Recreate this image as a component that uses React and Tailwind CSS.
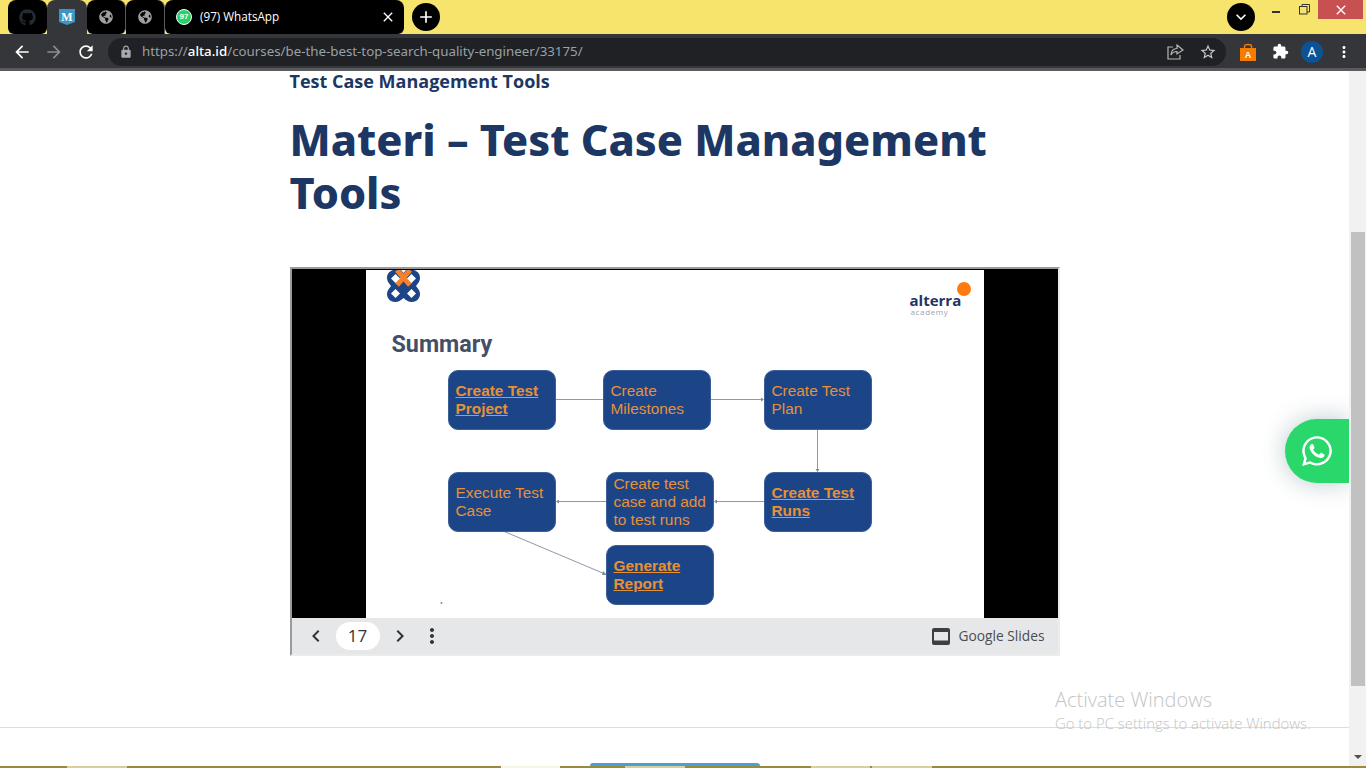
import { FaGithub, FaGlobeAmericas, FaWhatsapp } from "react-icons/fa";
import {
  MdArrowBack,
  MdArrowForward,
  MdChevronLeft,
  MdChevronRight,
  MdClose,
  MdExtension,
  MdKeyboardArrowDown,
  MdLock,
  MdMoreVert,
  MdRefresh,
  MdAdd,
  MdStarBorder,
} from "react-icons/md";

function TabStrip() {
  return (
    <div className="flex h-[34px] items-stretch bg-[#f6e46c] pl-2">
      {/* Tabs */}
      <div className="flex h-[34px] w-[39px] items-center justify-center rounded-t-lg rounded-b-md bg-black">
        <FaGithub className="h-[17px] w-[17px] text-[#232b30]" />
      </div>
      <div className="flex h-[34px] w-10 items-start justify-center rounded-t-lg bg-[#35363a] pt-[9px]">
        <svg width="16" height="17" viewBox="0 0 16 17">
          <path d="M0 0H16V13L8 16L0 13Z" fill="#3d94c6" />
          <text x="8" y="12" textAnchor="middle" fontSize="12" fontWeight="700" fill="#fff" fontFamily="Liberation Serif, serif">
            M
          </text>
        </svg>
      </div>
      <div className="flex h-[34px] w-[39px] items-center justify-center rounded-t-lg rounded-b-md border-r border-[#5a5a5a] bg-black">
        <FaGlobeAmericas className="h-[14px] w-[14px] text-[#a0a0a0]" />
      </div>
      <div className="flex h-[34px] w-[39px] items-center justify-center rounded-t-lg border-r border-[#5a5a5a] bg-black">
        <FaGlobeAmericas className="h-[14px] w-[14px] text-[#a0a0a0]" />
      </div>
      <div className="flex h-[34px] w-[239px] items-center rounded-t-lg rounded-b-md bg-black pl-[11px] pr-2">
        <div className="flex h-4 w-4 items-center justify-center rounded-full border-[1.5px] border-white bg-[#25d366]">
          <span className="font-['Liberation_Sans',sans-serif] text-[8px] font-bold text-white">97</span>
        </div>
        <span className="ml-[8px] flex-1 font-['Open_Sans',sans-serif] text-[11.7px] leading-none text-white">(97) WhatsApp</span>
        <MdClose className="h-4 w-4 text-white" />
      </div>
      <div className="ml-2 mt-[3px] flex h-7 w-7 items-center justify-center rounded-full bg-black">
        <MdAdd className="h-5 w-5 text-white" />
      </div>
      <div className="flex-1" />
      {/* Window controls */}
      <div className="mt-[3px] flex h-7 w-7 items-center justify-center rounded-full bg-black">
        <MdKeyboardArrowDown className="h-5 w-5 text-white" />
      </div>
      <div className="ml-[17px] mt-[11px] h-[2px] w-2 bg-[#333]" />
      <svg className="ml-[19px] mt-1" width="11" height="11" viewBox="0 0 11 11" fill="none" stroke="#333" strokeWidth="1">
        <rect x="0.5" y="2.5" width="7.5" height="7.5" />
        <path d="M3 2.5V0.5H10.5V8H8" />
      </svg>
      <div className="ml-[8px] mr-[3px] flex h-[19px] w-[45px] items-center justify-center bg-[#c75050]">
        <MdClose className="h-4 w-4 text-white" />
      </div>
    </div>
  );
}

function Toolbar() {
  return (
    <div className="flex h-[37px] items-start border-b-[3px] border-[#5a5b5e] bg-[#35363a] pl-3 pt-1">
      <MdArrowBack className="mt-1 h-5 w-5 text-white" />
      <MdArrowForward className="ml-3 mt-1 h-5 w-5 text-[#8b8c8e]" />
      <MdRefresh className="ml-3 mt-1 h-5 w-5 text-white" />
      <div className="ml-3 flex h-7 w-[1118px] items-center rounded-full bg-[#202124] pl-[11px]">
        <MdLock className="h-[14px] w-[14px] text-[#a8a9ab]" />
        <span className="ml-[9px] flex-1 whitespace-nowrap font-['Noto_Sans',sans-serif] text-[13.3px] text-[#9aa0a6]">
          https://<span className="font-medium text-white">alta.id</span>/courses/be-the-best-top-search-quality-engineer/33175/
        </span>
        <svg className="mr-[15px]" width="17" height="16" viewBox="0 0 17 16" fill="none" stroke="#b5b6b8" strokeWidth="1.2">
          <path d="M6 3H1V15H13V11" />
          <path d="M10 1L16 6L10 10V7.5C7 7.5 5 9 4 11C4 7.5 6 4.500 10 4.500Z" />
        </svg>
        <MdStarBorder className="mr-[9px] h-[18px] w-[18px] text-[#c4c5c7]" />
      </div>
      <svg className="ml-[14px] mt-[5px]" width="16" height="18" viewBox="0 0 16 18">
        <path d="M4.500 5V3C4.500 1 11.500 1 11.500 3V5" fill="none" stroke="#f57c00" strokeWidth="1.4" />
        <rect y="5" width="16" height="13" fill="#f57c00" />
        <text x="8" y="15" textAnchor="middle" fontSize="9" fill="#fff" fontFamily="Liberation Sans, sans-serif" fontWeight="700">
          A
        </text>
      </svg>
      <MdExtension className="ml-[16px] mt-[5px] h-[17px] w-[17px] text-white" />
      <div className="ml-[12px] mt-[3px] flex h-[22px] w-[22px] items-center justify-center rounded-full bg-[#0b5394] font-['Open_Sans',sans-serif] text-sm text-white">
        A
      </div>
      <MdMoreVert className="ml-3 mt-[5px] h-[18px] w-[18px] text-white" />
    </div>
  );
}

function SlideBox({ className, bold, lines }) {
  return (
    <div
      className={`absolute flex h-[60px] w-[108px] flex-col justify-center rounded-[10px] border border-[#3c5f98] bg-[#1c4587] pl-[7px] font-['Liberation_Sans',sans-serif] text-[15.4px] leading-[18px] text-[#e69138] ${className}`}
    >
      {lines.map((line) => (
        <span key={line} className={bold ? "w-fit font-bold underline" : ""}>
          {line}
        </span>
      ))}
    </div>
  );
}

function Slide() {
  return (
    <div className="relative h-[348px] w-[618px] overflow-hidden bg-white">
      {/* Logo */}
      <svg className="absolute left-[21px] top-0" width="33" height="32" viewBox="0 0 33 32">
        <path
          d="M6 0H27C32 2 33 5 33 8C33 11 31 13.500 29 16C31 18.500 33 21 33 24C33 28 30 32 25 32C21 32 19 30 16.500 28C14 30 12 32 8 32C3 32 0 28 0 24C0 21 2 18.500 4 16C2 13.500 0 11 0 8C0 5 1 2 6 0Z"
          fill="#1c4587"
        />
        <path d="M10 0L23 15M23 0L10 15" stroke="#f5822a" strokeWidth="5" />
        <path d="M8.500 4L13 8.500L8.500 13L4 8.500Z" fill="#fff" />
        <path d="M24.500 4L29 8.500L24.500 13L20 8.500Z" fill="#fff" />
        <path d="M8.500 19L13 23.500L8.500 28L4 23.500Z" fill="#fff" />
        <path d="M24.500 19L29 23.500L24.500 28L20 23.500Z" fill="#fff" />
        <path d="M13.500 32L16.500 29L19.500 32Z" fill="#fff" />
        <path d="M16.500 0L14 0L16.500 3L19 0Z" fill="#fff" />
      </svg>
      <div className="absolute left-[26px] top-[59px] font-['Roboto',sans-serif] text-[23.3px] font-bold leading-[30px] text-[#434f66]">Summary</div>

      {/* Brand */}
      <div className="absolute left-[591px] top-[12px] h-[14px] w-[14px] rounded-full bg-[#ff7a0f]" />
      <div className="absolute left-[544px] top-[24px] font-['Open_Sans',sans-serif] text-[15px] font-bold leading-[13px] text-[#1f3566]">alterra</div>
      <div className="absolute left-[545px] top-[37px] font-['Open_Sans',sans-serif] text-[8px] leading-[9px] tracking-[0.08em] text-[#9aa3b5]">academy</div>

      {/* Connectors */}
      <svg className="absolute inset-0" width="618" height="348" fill="#7f8a9c" stroke="none">
        <g stroke="#8e98a8" strokeWidth="1">
          <path d="M190 129.500H237" />
          <path d="M345 129.500H397" />
          <path d="M451.500 160V200" />
          <path d="M398 231.500H349" />
          <path d="M240 231.500H191" />
          <path d="M137 261L239 304" />
        </g>
        <path d="M237 127.500L240 129.500L237 131.500Z" />
        <path d="M395 127.500L398 129.500L395 131.500Z" />
        <path d="M449.500 199L451.500 202L453.500 199Z" />
        <path d="M351 229.500L348 231.500L351 233.500Z" />
        <path d="M193 229.500L190 231.500L193 233.500Z" />
        <path d="M237 301L241 305L236 305Z" />
        <circle cx="75.500" cy="333" r="1" />
      </svg>

      {/* Nodes */}
      <SlideBox className="left-[82px] top-[100px]" bold lines={["Create Test", "Project"]} />
      <SlideBox className="left-[237px] top-[100px]" lines={["Create", "Milestones"]} />
      <SlideBox className="left-[398px] top-[100px]" lines={["Create Test", "Plan"]} />
      <SlideBox className="left-[82px] top-[202px]" lines={["Execute Test", "Case"]} />
      <SlideBox className="left-[240px] top-[202px]" lines={["Create test", "case and add", "to test runs"]} />
      <SlideBox className="left-[398px] top-[202px]" bold lines={["Create Test", "Runs"]} />
      <SlideBox className="left-[240px] top-[275px]" bold lines={["Generate", "Report"]} />
    </div>
  );
}

function SlidesEmbed() {
  return (
    <div className="mt-[48px] w-[770px] border-2 border-b-[#ececec] border-l-[#9a9a9a] border-r-[#ececec] border-t-[#9a9a9a]">
      <div className="flex justify-center border-t border-black bg-black">
        <Slide />
      </div>
      <div className="flex h-9 items-center bg-[#e6e7e9] text-[#333]">
        <MdChevronLeft className="ml-3 h-6 w-6" />
        <div className="ml-2 flex h-7 w-11 items-center justify-center rounded-full bg-white font-['Open_Sans',sans-serif] text-[17px] text-[#333]">17</div>
        <MdChevronRight className="ml-2 h-6 w-6" />
        <MdMoreVert className="ml-[8px] h-6 w-6" />
        <div className="flex-1" />
        <svg width="18" height="17" viewBox="0 0 18 17">
          <rect width="18" height="17" rx="2" fill="#3c4043" />
          <rect x="2" y="4" width="14" height="8.500" fill="#e6e7e9" />
        </svg>
        <span className="ml-[9px] mr-[13px] font-['Open_Sans',sans-serif] text-[13.75px] text-[#4a4d52]">Google Slides</span>
      </div>
    </div>
  );
}

function Scrollbar() {
  return (
    <div className="flex w-[17px] flex-col bg-[#f1f1f1] pl-[2px] pr-[1px]">
      <div className="mt-[161px] h-[454px] bg-[#c1c1c1]" />
      <div className="flex-1" />
      <div className="mx-auto mb-[7px] h-0 w-0 border-x-[4px] border-t-[4px] border-x-transparent border-t-[#505050]" />
    </div>
  );
}

function Page() {
  return (
    <div className="relative flex min-h-0 flex-1 overflow-hidden">
      <div className="relative flex flex-1 flex-col items-center overflow-hidden bg-white">
        <div className="w-[770px] flex-1">
          <p className="font-['Open_Sans',sans-serif] text-lg font-bold leading-[20px] text-[#1c3763]">Test Case Management Tools</p>
          <h1 className="mt-[22px] w-[740px] font-['Noto_Sans',sans-serif] text-[43.2px] font-extrabold leading-[53px] text-[#1c3763]">
            Materi – Test Case Management Tools
          </h1>
          <SlidesEmbed />
        </div>

        {/* Footer line and the top of the next button */}
        <div className="h-px w-full bg-[#dddddd]" />
        <div className="flex h-[38px] w-full items-end justify-center">
          <div className="h-[3px] w-[170px] rounded-t-[12px] bg-[#45a2d3]" />
        </div>

        {/* Floating WhatsApp */}
        <div className="absolute right-0 top-[348px] flex h-16 w-16 items-center justify-center rounded-l-full bg-[#29d76b] shadow-[0_0_24px_rgba(30,80,90,0.3)]">
          <FaWhatsapp className="h-[34px] w-[34px] text-white" />
        </div>
      </div>
      <Scrollbar />
    </div>
  );
}

function Taskbar() {
  return (
    <div className="flex h-[2px] bg-[#9a8a3c]">
      <div className="ml-[67px] w-[60px] bg-[#d8cf9c]" />
      <div className="ml-[374px] w-[59px] bg-[#f8f5e2]" />
      <div className="ml-[65px] w-[60px] bg-[#d8cf9c]" />
      <div className="ml-[126px] w-[59px] bg-[#d8cf9c]" />
      <div className="ml-[2px] w-[60px] bg-[#d8cf9c]" />
    </div>
  );
}

export default function App() {
  return (
    <div className="relative flex h-screen w-full flex-col overflow-hidden">
      <TabStrip />
      <Toolbar />
      <Page />
      <Taskbar />

      {/* Windows watermark */}
      <div className="pointer-events-none absolute left-[1055px] top-[688px] font-['Open_Sans',sans-serif] font-light text-[#c4c4c4]">
        <div className="text-[20px] leading-6">Activate Windows</div>
        <div className="text-[14.900px] leading-[22px]">Go to PC settings to activate Windows.</div>
      </div>
    </div>
  );
}
